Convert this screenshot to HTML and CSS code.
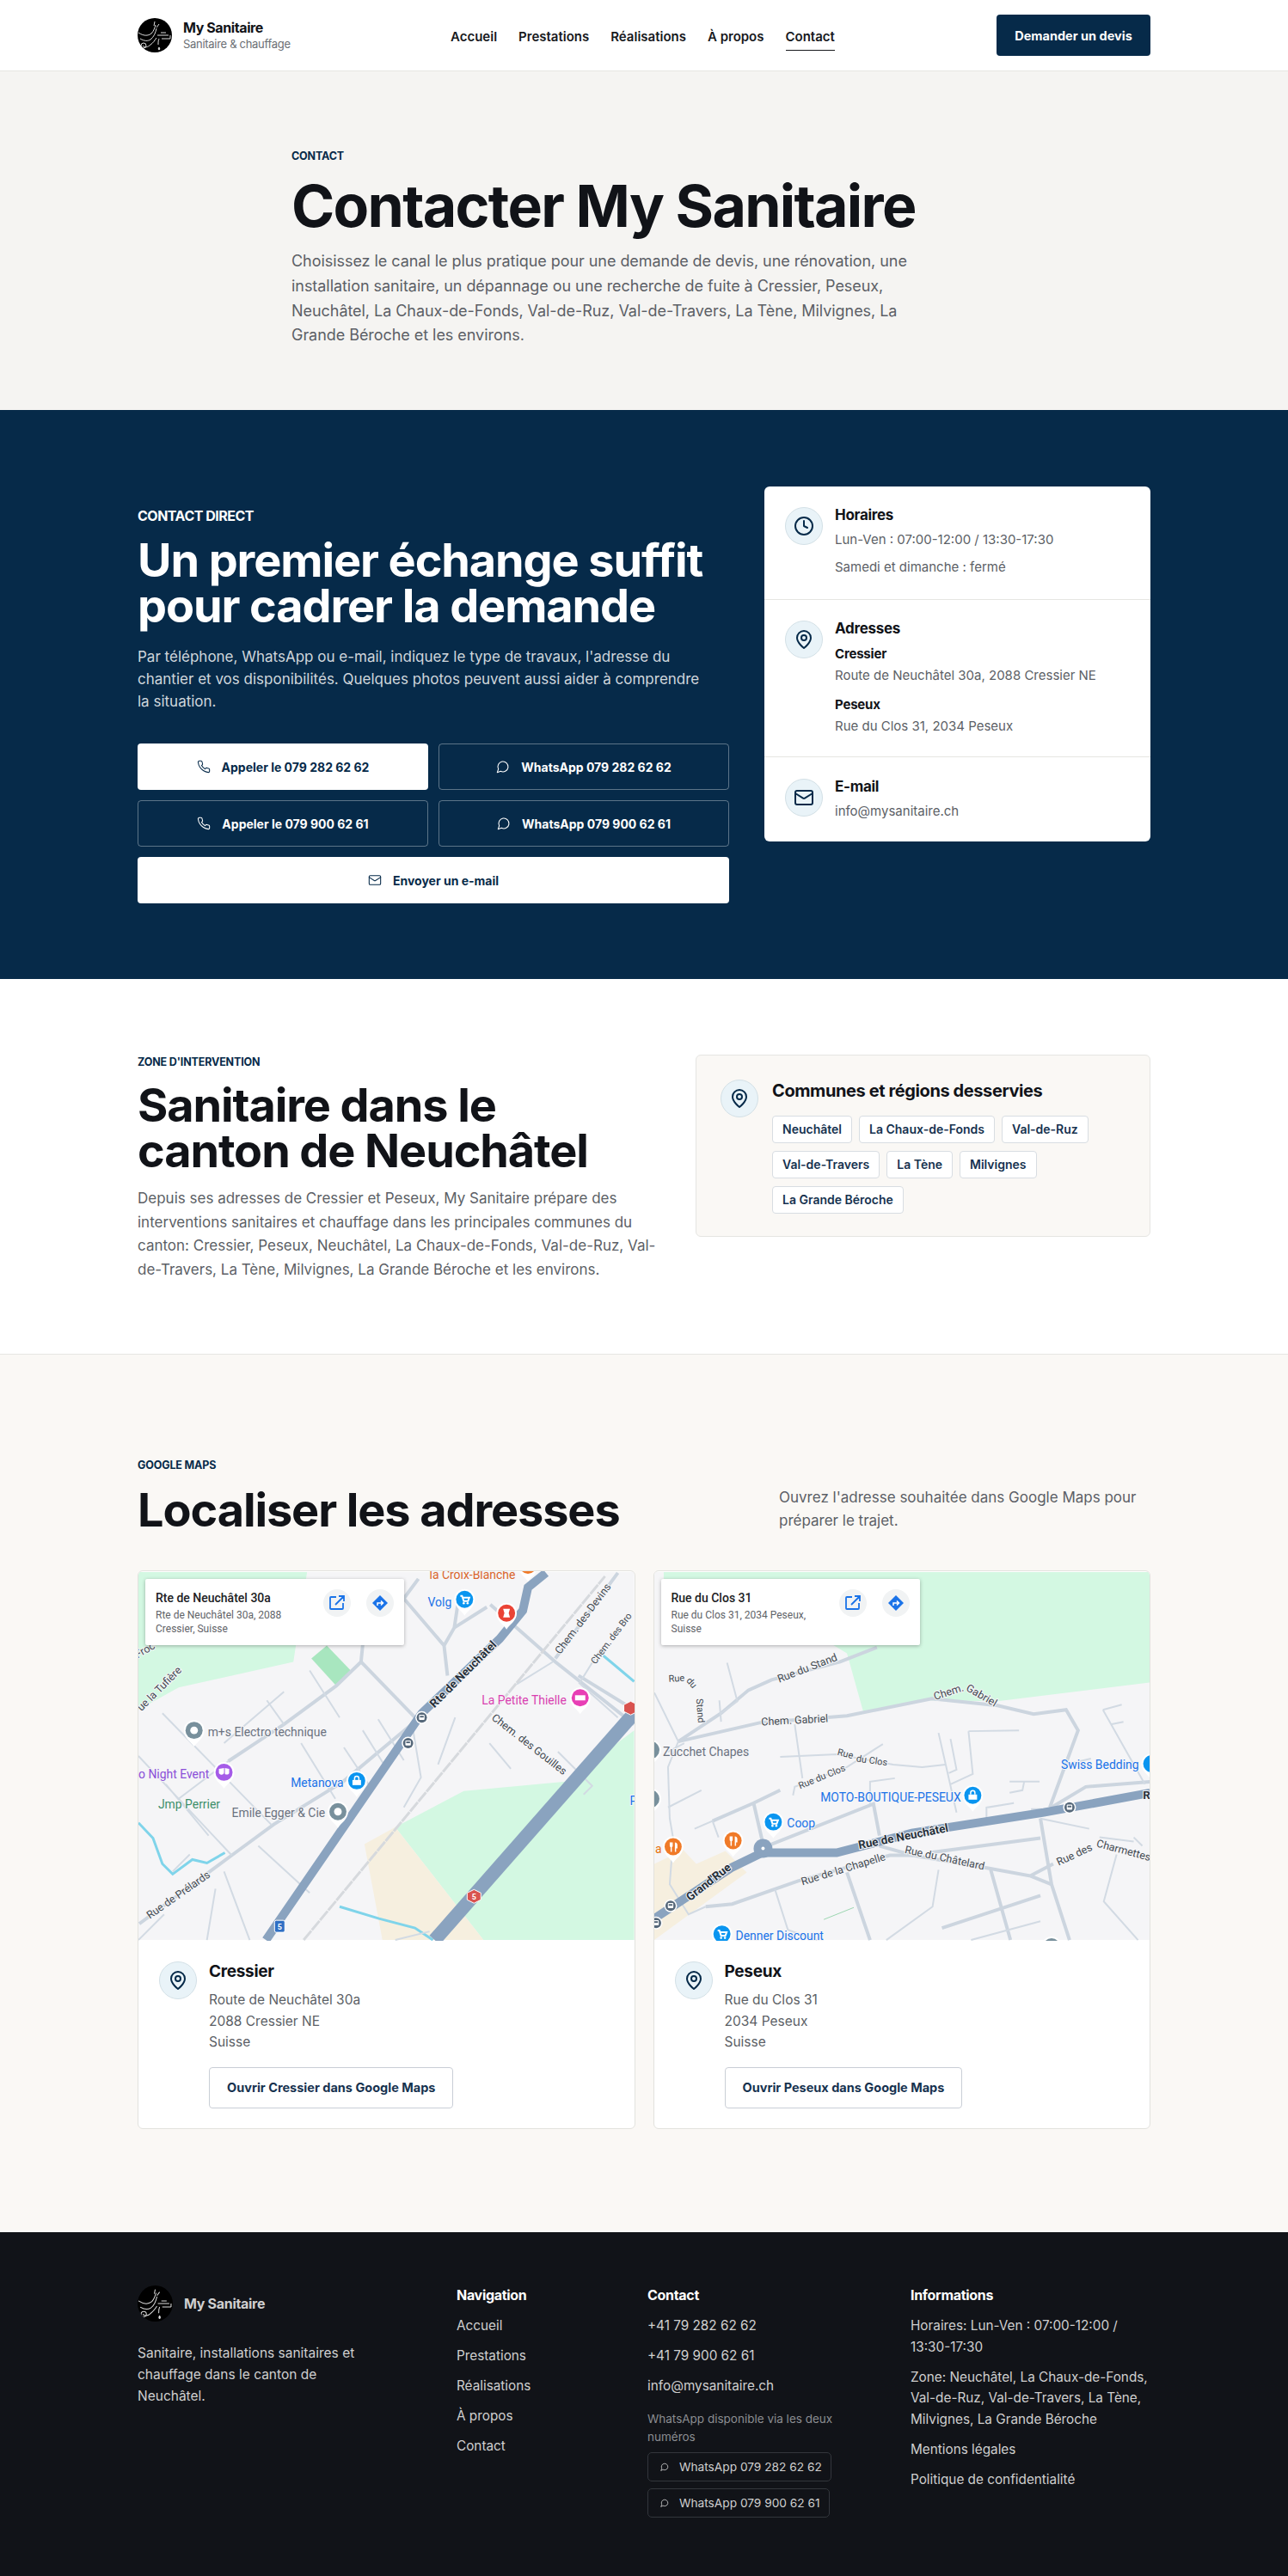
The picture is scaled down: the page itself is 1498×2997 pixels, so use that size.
FILE: index.html
```html
<!DOCTYPE html>
<html lang="fr">
<head>
  <meta charset="UTF-8">
  <title>Contact - My Sanitaire</title>
  <link rel="stylesheet" href="styles.css">
</head>
<body>

  <!-- shared icons -->
  <svg class="defs" width="0" height="0" aria-hidden="true">
    <symbol id="i-phone" viewBox="0 0 24 24"><path d="M22 16.92v3a2 2 0 0 1-2.18 2 19.79 19.79 0 0 1-8.63-3.07 19.5 19.5 0 0 1-6-6 19.79 19.79 0 0 1-3.07-8.67A2 2 0 0 1 4.11 2h3a2 2 0 0 1 2 1.72 12.84 12.84 0 0 0 .7 2.81 2 2 0 0 1-.45 2.11L8.09 9.91a16 16 0 0 0 6 6l1.27-1.27a2 2 0 0 1 2.11-.45 12.84 12.84 0 0 0 2.81.7A2 2 0 0 1 22 16.92z"/></symbol>
    <symbol id="i-chat" viewBox="0 0 24 24"><path d="M7.9 20A9 9 0 1 0 4 16.1L2 22Z"/></symbol>
    <symbol id="i-mail" viewBox="0 0 24 24"><rect x="2" y="4" width="20" height="16" rx="2"/><path d="m22 7-8.97 5.7a1.94 1.94 0 0 1-2.06 0L2 7"/></symbol>
    <symbol id="i-pin" viewBox="0 0 24 24"><path d="M20 10c0 6-8 12-8 12s-8-6-8-12a8 8 0 0 1 16 0Z"/><circle cx="12" cy="10" r="3"/></symbol>
    <symbol id="i-clock" viewBox="0 0 24 24"><circle cx="12" cy="12" r="10"/><path d="M12 6v6l4 2"/></symbol>
    <symbol id="i-logo" viewBox="0 0 40 40">
      <path d="M1 17c6 4 11 4 15 1 3-3 4-7 5-10M3 24c5 3 9 3 12 1 4-3 6-8 7-13M19 9l1-5M22 11l3-4M6 32c2 3 6 2 9-1 3-2 5-5 7-8" fill="none"/>
      <circle cx="7" cy="32" r="3" fill="none"/>
      <path d="M23 20h13M27 17h6M25 24c-1 2-1 4-1 7M28 24h10M38 20v4" fill="none"/>
      <path d="M25 34c1 1 1 3 0 3s-1-2 0-3z"/>
    </symbol>
    <g id="pin">
      <path d="M0 19C-3 14-12 9-12 0A12 12 0 1 1 12 0C12 9 3 14 0 19Z" fill="#fff"/>
      <circle r="10" fill="currentColor"/>
    </g>
    <g id="bus">
      <circle r="7.5" fill="#fff"/>
      <circle r="6" fill="#56687a"/>
      <rect x="-3.2" y="-3.2" width="6.4" height="6" rx="1" fill="#fff"/>
      <rect x="-2.2" y="-2" width="4.4" height="2" fill="#56687a"/>
    </g>
    <g id="g-cart">
      <path d="M-5-4h2l2 6h5l1.500-4H-2" fill="none" stroke="#fff" stroke-width="2"/>
      <circle cx="-1" cy="4.500" r="1.300" fill="#fff"/><circle cx="3.500" cy="4.500" r="1.300" fill="#fff"/>
    </g>
    <g id="g-bag">
      <path d="M-5-1h10v6h-10z" fill="#fff"/>
      <path d="M-2.500-1v-2a2.500 2.500 0 0 1 5 0v2" fill="none" stroke="#fff" stroke-width="1.500"/>
    </g>
    <g id="g-food">
      <path d="M-4-5v4a1.500 1.500 0 0 0 1 1.500V6h1.500V.5a1.500 1.500 0 0 0 1-1.500V-5M2-5v11h1.500V2H5V-2C5-4 3.500-5 2-5z" fill="#fff"/>
    </g>
    <g id="g-masks">
      <path d="M-6-4 0-5V0C0 3-4 4-6 1ZM1-5 6-4V1C5 3 3 3 1 2Z" fill="#fff"/>
    </g>
    <g id="g-open">
      <circle r="16" fill="#f1f3f4"/>
      <path d="M-1-7h-6a1 1 0 0 0-1 1V6a1 1 0 0 0 1 1H6a1 1 0 0 0 1-1V0M-2 2 7-7M2-8h6v6" fill="none" stroke="#1a73e8" stroke-width="1.800"/>
    </g>
    <g id="g-dir">
      <circle r="16" fill="#f1f3f4"/>
      <path d="M0-9 9 0 0 9-9 0Z" fill="#1a73e8"/>
      <path d="M-3 3V0H3M1-2.500 3.500 0 1 2.500" fill="none" stroke="#fff" stroke-width="1.500"/>
    </g>
  </svg>

  <header class="site-header">
    <div class="wrap header-row">
      <a class="brand" href="#">
        <svg class="logo"><use href="#i-logo"/></svg>
        <span class="brand-text">
          <span class="brand-name">My Sanitaire</span>
          <span class="brand-sub">Sanitaire &amp; chauffage</span>
        </span>
      </a>
      <nav class="main-nav">
        <a href="#">Accueil</a>
        <a href="#">Prestations</a>
        <a href="#">Réalisations</a>
        <a href="#">À propos</a>
        <a href="#" class="active">Contact</a>
      </nav>
      <a class="btn-quote" href="#">Demander un devis</a>
    </div>
  </header>

  <section class="hero">
    <div class="hero-inner">
      <p class="eyebrow">Contact</p>
      <h1>Contacter My Sanitaire</h1>
      <p class="hero-text">Choisissez le canal le plus pratique pour une demande de devis, une rénovation, une installation sanitaire, un dépannage ou une recherche de fuite à Cressier, Peseux, Neuchâtel, La Chaux-de-Fonds, Val-de-Ruz, Val-de-Travers, La Tène, Milvignes, La Grande Béroche et les environs.</p>
    </div>
  </section>

  <section class="direct">
    <div class="wrap direct-grid">
      <div class="direct-main">
        <p class="direct-label">Contact direct</p>
        <h2 class="title-light">Un premier échange suffit pour cadrer la demande</h2>
        <p class="direct-text">Par téléphone, WhatsApp ou e-mail, indiquez le type de travaux, l'adresse du chantier et vos disponibilités. Quelques photos peuvent aussi aider à comprendre la situation.</p>
        <div class="cta-grid">
          <a class="cta cta-white" href="#"><svg class="ico16"><use href="#i-phone"/></svg>Appeler le 079 282 62 62</a>
          <a class="cta cta-line" href="#"><svg class="ico16"><use href="#i-chat"/></svg>WhatsApp 079 282 62 62</a>
          <a class="cta cta-line" href="#"><svg class="ico16"><use href="#i-phone"/></svg>Appeler le 079 900 62 61</a>
          <a class="cta cta-line" href="#"><svg class="ico16"><use href="#i-chat"/></svg>WhatsApp 079 900 62 61</a>
          <a class="cta cta-white cta-wide" href="#"><svg class="ico16"><use href="#i-mail"/></svg>Envoyer un e-mail</a>
        </div>
      </div>

      <aside class="info-card">
        <div class="info-row">
          <span class="round-ico"><svg class="ico24"><use href="#i-clock"/></svg></span>
          <div>
            <h3>Horaires</h3>
            <p class="info-line first">Lun-Ven : 07:00-12:00 / 13:30-17:30</p>
            <p class="info-line next">Samedi et dimanche : fermé</p>
          </div>
        </div>
        <div class="info-row">
          <span class="round-ico"><svg class="ico24"><use href="#i-pin"/></svg></span>
          <div>
            <h3>Adresses</h3>
            <h4>Cressier</h4>
            <p class="info-line">Route de Neuchâtel 30a, 2088 Cressier NE</p>
            <h4 class="spaced">Peseux</h4>
            <p class="info-line">Rue du Clos 31, 2034 Peseux</p>
          </div>
        </div>
        <div class="info-row info-last">
          <span class="round-ico"><svg class="ico24"><use href="#i-mail"/></svg></span>
          <div>
            <h3>E-mail</h3>
            <p class="info-line first">info@mysanitaire.ch</p>
          </div>
        </div>
      </aside>
    </div>
  </section>

  <section class="zone">
    <div class="wrap zone-grid">
      <div class="zone-main">
        <p class="eyebrow">Zone d'intervention</p>
        <h2 class="title">Sanitaire dans le<br>canton de Neuchâtel</h2>
        <p class="body-text">Depuis ses adresses de Cressier et Peseux, My Sanitaire prépare des interventions sanitaires et chauffage dans les principales communes du canton: Cressier, Peseux, Neuchâtel, La Chaux-de-Fonds, Val-de-Ruz, Val-de-Travers, La Tène, Milvignes, La Grande Béroche et les environs.</p>
      </div>
      <div class="zone-card">
        <span class="round-ico"><svg class="ico24"><use href="#i-pin"/></svg></span>
        <div>
          <h3 class="zone-title">Communes et régions desservies</h3>
          <ul class="chips">
            <li>Neuchâtel</li>
            <li>La Chaux-de-Fonds</li>
            <li>Val-de-Ruz</li>
            <li>Val-de-Travers</li>
            <li>La Tène</li>
            <li>Milvignes</li>
            <li>La Grande Béroche</li>
          </ul>
        </div>
      </div>
    </div>
  </section>

  <section class="maps">
    <div class="wrap">
      <div class="maps-head">
        <div>
          <p class="eyebrow">Google Maps</p>
          <h2 class="title">Localiser les adresses</h2>
        </div>
        <p class="maps-text">Ouvrez l'adresse souhaitée dans Google Maps pour préparer le trajet.</p>
      </div>

      <div class="map-grid">
        <article class="map-card">
          <div class="map">
            <svg class="map-svg" viewBox="0 0 579 430">
              <rect width="579" height="430" fill="#f5f5f7"/>
              <path d="M0 0H197L181 105 47 135 0 161Z" fill="#d3f8e2"/>
              <path d="M202 101 220 86 248 115 231 133Z" fill="#a8e6bf"/>
              <path d="M300 298 380 256 499 245 579 185V430H403Z" fill="#d3f8e2"/>
              <path d="M264 318 300 298 403 430H285Z" fill="#f6efdf"/>
              <g class="water">
                <path d="M0 293 17 311 28 341 40 353 63 336 80 340 101 328"/>
                <path d="M235 391 281 405 323 416 344 430"/>
                <path d="M541 96 579 128"/>
              </g>
              <g class="rd">
                <path d="M1 411 109 331 158 295 239 245 319 178"/>
                <path d="M105 221 170 178 231 133 260 105 262 85"/>
                <path d="M260 105 323 170"/>
                <path d="M310 31 357 86 361 121M357 86 369 65 373 38M369 65 407 41M327 8 310 31"/>
                <path d="M411 38 487 105 579 178"/>
                <path d="M487 101 560 1M514 121 579 161"/>
              </g>
              <g class="rd-thin">
                <path d="M28 165 155 295M0 215 109 331M32 248 82 308M47 265 105 221"/>
                <path d="M442 131 484 105M100 200 170 140M170 178 150 150M200 115 235 170M262 185 290 230M280 172 310 220"/>
                <path d="M240 205 270 250M190 200 230 265M140 320 200 375M300 430 340 420M130 430 100 350M90 370 80 430"/>
                <path d="M370 170 350 225M410 200 435 230M490 210 530 250 520 260M540 90 515 130 560 170"/>
                <path d="M320 180 330 240 310 275M60 330 40 350M0 430 30 400"/>
              </g>
              <path class="rail" d="M193 430 545 5"/>
              <path class="hw" d="M346 430 579 165"/>
              <path class="mw" d="M149 430 331 165 422 78 449 45 455 18 476 1"/>
              <g class="lb-road">
                <text transform="translate(380 120) rotate(-45)" class="lb-bold">Rte de Neuchâtel</text>
                <text transform="translate(520 55) rotate(-53)">Chem. des Devins</text>
                <text transform="translate(553 78) rotate(-53)" class="lb-sm">Chem. des Bro</text>
                <text transform="translate(456 202) rotate(38)">Chem. des Gouilles</text>
                <text transform="translate(47 378) rotate(-35)">Rue de Prélards</text>
                <text transform="translate(25 137) rotate(-45)">ue la Tufière</text>
                <text transform="translate(8 92) rotate(-30)">Froc</text>
              </g>
              <g class="lb-place">
                <text x="340" y="8" fill="#d9652b">la Croix-Blanche</text>
                <text x="338" y="40" fill="#1a73e8">Volg</text>
                <text x="401" y="155" fill="#d93fb0">La Petite Thielle</text>
                <text x="81" y="192" fill="#6b7280">m+s Electro technique</text>
                <text x="0" y="241" fill="#8a4fd8">o Night Event</text>
                <text x="178" y="251" fill="#1a73e8">Metanova</text>
                <text x="23" y="276" fill="#3d8f6a">Jmp Perrier</text>
                <text x="109" y="286" fill="#6b7280">Emile Egger &amp; Cie</text>
                <text x="574" y="272" fill="#1a73e8">P</text>
              </g>
              <use href="#pin" x="65" y="185" class="p-gray"/><circle cx="65" cy="185" r="4.500" fill="#fff"/>
              <use href="#pin" x="100" y="234" class="p-purple"/><use href="#g-masks" x="100" y="234"/>
              <use href="#pin" x="255" y="244" class="p-blue"/><use href="#g-bag" x="255" y="244"/>
              <use href="#pin" x="233" y="280" class="p-gray"/><circle cx="233" cy="280" r="4.500" fill="#fff"/>
              <use href="#pin" x="381" y="32" class="p-blue"/><use href="#g-cart" x="381" y="32"/>
              <use href="#pin" x="430" y="48" class="p-red"/><path d="M426 43h8l-1.500 5 1.500 5h-8l1.500-5z" fill="#fff"/>
              <use href="#pin" x="516" y="147" class="p-pink"/><rect x="510" y="144" width="12" height="6" fill="#fff"/>
              <use href="#pin" x="455" y="-8" class="p-orange"/>
              <use href="#bus" x="331" y="170"/>
              <use href="#bus" x="315" y="200"/>
              <path d="M392 371 400 375V383L392 387 384 383V375Z" fill="#d9534f" stroke="#fff"/>
              <text x="392" y="383" class="shield">5</text>
              <rect x="159" y="407" width="12" height="14" rx="2" fill="#2f6fc4" stroke="#fff"/>
              <text x="165" y="418" class="shield">5</text>
              <path d="M575 151 583 155V163L575 167 567 163V155Z" fill="#d9534f" stroke="#fff"/>
            </svg>
            <div class="map-box">
              <div class="map-box-text">
                <strong>Rte de Neuchâtel 30a</strong>
                <span>Rte de Neuchâtel 30a, 2088 Cressier, Suisse</span>
              </div>
              <svg class="map-actions" viewBox="0 0 82 32"><use href="#g-open" x="16" y="16"/><use href="#g-dir" x="66" y="16"/></svg>
            </div>
          </div>
          <div class="map-body">
            <span class="round-ico"><svg class="ico24"><use href="#i-pin"/></svg></span>
            <div>
              <h3>Cressier</h3>
              <p class="addr">Route de Neuchâtel 30a</p>
              <p class="addr">2088 Cressier NE</p>
              <p class="addr">Suisse</p>
              <a class="btn-map" href="#">Ouvrir Cressier dans Google Maps</a>
            </div>
          </div>
        </article>

        <article class="map-card">
          <div class="map">
            <svg class="map-svg" viewBox="0 0 579 430">
              <rect width="579" height="430" fill="#f5f5f7"/>
              <path d="M11 0H579V129L401 151 320 150 244 163 225 95 200 80H11Z" fill="#d3f8e2"/>
              <path d="M0 341 34 325 49 341 83 326 108 351 0 430Z" fill="#f6efdf"/>
              <g class="rd">
                <path d="M28 198 78 165 110 138 137 126 217 105 260 88"/>
                <path d="M28 198 124 176 225 168 324 148 401 156 443 166 481 161 495 185 462 275"/>
                <path d="M68 291 116 270 147 255M116 270 127 318M137 318 256 271 263 308"/>
                <path d="M60 391 91 388 168 361 275 331 302 331M321 328 451 311"/>
                <path d="M263 320 302 331 390 346 439 355 466 341M439 355 464 365"/>
                <path d="M451 288 464 365 485 430M393 348 416 430M225 351 252 430M336 416 451 378"/>
                <path d="M464 275 504 251 579 245"/>
              </g>
              <g class="rd-thin">
                <path d="M0 141 28 198 16 228 18 288 22 311 18 365 40 400 60 391"/>
                <path d="M85 106 97 151 78 165M76 150 78 175M16 210 35 200"/>
                <path d="M147 216 213 213 279 225 313 228 340 225"/>
                <path d="M164 178 173 241M162 261 164 251 225 228 267 201"/>
                <path d="M16 275 55 255M47 300 68 291 75 310"/>
                <path d="M252 271 252 245 281 241M332 188 353 281M346 195 353 231 344 235M367 186 426 185M367 186 372 236 346 248"/>
                <path d="M141 371 156 418 190 430M271 430 325 391 332 348M370 430 451 408"/>
                <path d="M524 161 573 248M524 161 546 155M533 178 548 175M451 288 508 300M480 225 510 218"/>
                <path d="M415 245 450 245M415 258 430 255 432 245M390 275 420 270 388 275 388 290M440 277 470 277"/>
                <path d="M520 310 560 315M540 330 525 385 565 430M560 310 570 320"/>
              </g>
              <path class="mw" d="M0 405 91 345 126 328 213 328 301 305 455 281 579 258"/>
              <circle cx="127" cy="323" r="11" fill="#8aa3bf"/><circle cx="127" cy="323" r="2" fill="#fff"/>
              <path d="M198 406 233 392" stroke="#9bd6b0" fill="none"/>
              <g class="lb-road">
                <text transform="translate(179 113) rotate(-21)">Rue du Stand</text>
                <text transform="translate(26 125) rotate(-3)" class="lb-sm">Rue</text>
                <text transform="translate(43 130) rotate(50)" class="lb-sm">du</text>
                <text transform="translate(53 162) rotate(85)" class="lb-sm">Stand</text>
                <text transform="translate(164 174) rotate(-3)">Chem. Gabriel</text>
                <text transform="translate(344 141) rotate(-18)">Chem.</text>
                <text transform="translate(382 145) rotate(30)">Gabriel</text>
                <text transform="translate(223 213) rotate(15)" class="lb-sm">Rue</text>
                <text transform="translate(254 221) rotate(8)" class="lb-sm">du Clos</text>
                <text transform="translate(196 240) rotate(-22)" class="lb-sm">Rue du Clos</text>
                <text transform="translate(291 310) rotate(-11)" class="lb-bold">Rue de Neuchâtel</text>
                <text transform="translate(64 363) rotate(-38)" class="lb-bold">Grand'Rue</text>
                <text transform="translate(221 348) rotate(-17)">Rue de la Chapelle</text>
                <text transform="translate(339 335) rotate(12)">Rue du Châtelard</text>
                <text transform="translate(491 331) rotate(-25)">Rue des</text>
                <text transform="translate(548 326) rotate(15)">Charmettes</text>
                <text transform="translate(575 262)" class="lb-bold">R</text>
              </g>
              <g class="lb-place">
                <text x="10" y="215" fill="#6b7280">Zucchet Chapes</text>
                <text x="194" y="268" fill="#1a73e8">MOTO-BOUTIQUE-PESEUX</text>
                <text x="155" y="298" fill="#1a73e8">Coop</text>
                <text x="475" y="230" fill="#1a73e8">Swiss Bedding</text>
                <text x="95" y="430" fill="#1a73e8">Denner Discount</text>
                <text x="1" y="328" fill="#e8710a">a</text>
              </g>
              <use href="#pin" x="372" y="261" class="p-blue"/><use href="#g-bag" x="372" y="261"/>
              <use href="#pin" x="139" y="292" class="p-blue"/><use href="#g-cart" x="139" y="292"/>
              <use href="#pin" x="92" y="314" class="p-orange"/><use href="#g-food" x="92" y="314"/>
              <use href="#pin" x="22" y="321" class="p-orange"/><use href="#g-food" x="22" y="321"/>
              <use href="#pin" x="79" y="423" class="p-blue"/><use href="#g-cart" x="79" y="423"/>
              <use href="#pin" x="464" y="438" class="p-gray"/>
              <use href="#pin" x="581" y="224" class="p-blue"/>
              <use href="#pin" x="-4" y="265" class="p-gray"/>
              <use href="#pin" x="-4" y="208" class="p-gray"/>
              <use href="#bus" x="485" y="275"/>
              <use href="#bus" x="19" y="390"/>
              <use href="#bus" x="2" y="410"/>
            </svg>
            <div class="map-box">
              <div class="map-box-text">
                <strong>Rue du Clos 31</strong>
                <span>Rue du Clos 31, 2034 Peseux, Suisse</span>
              </div>
              <svg class="map-actions" viewBox="0 0 82 32"><use href="#g-open" x="16" y="16"/><use href="#g-dir" x="66" y="16"/></svg>
            </div>
          </div>
          <div class="map-body">
            <span class="round-ico"><svg class="ico24"><use href="#i-pin"/></svg></span>
            <div>
              <h3>Peseux</h3>
              <p class="addr">Rue du Clos 31</p>
              <p class="addr">2034 Peseux</p>
              <p class="addr">Suisse</p>
              <a class="btn-map" href="#">Ouvrir Peseux dans Google Maps</a>
            </div>
          </div>
        </article>
      </div>
    </div>
  </section>

  <footer class="site-footer">
    <div class="wrap footer-grid">
      <div>
        <div class="footer-brand">
          <svg class="logo logo-foot"><use href="#i-logo"/></svg>
          <span>My Sanitaire</span>
        </div>
        <p class="footer-desc">Sanitaire, installations sanitaires et chauffage dans le canton de Neuchâtel.</p>
      </div>
      <div class="footer-col">
        <h5>Navigation</h5>
        <a href="#">Accueil</a>
        <a href="#">Prestations</a>
        <a href="#">Réalisations</a>
        <a href="#">À propos</a>
        <a href="#">Contact</a>
      </div>
      <div class="footer-col">
        <h5>Contact</h5>
        <a href="#">+41 79 282 62 62</a>
        <a href="#">+41 79 900 62 61</a>
        <a href="#">info@mysanitaire.ch</a>
        <p class="footer-note">WhatsApp disponible via les deux numéros</p>
        <a class="wa-chip" href="#"><svg class="ico10"><use href="#i-chat"/></svg>WhatsApp 079 282 62 62</a>
        <a class="wa-chip" href="#"><svg class="ico10"><use href="#i-chat"/></svg>WhatsApp 079 900 62 61</a>
      </div>
      <div class="footer-col">
        <h5>Informations</h5>
        <p>Horaires: Lun-Ven : 07:00-12:00 / <span class="nowrap">13:30-17:30</span></p>
        <p>Zone: Neuchâtel, La Chaux-de-Fonds, Val-de-Ruz, Val-de-Travers, La Tène, Milvignes, La Grande Béroche</p>
        <a href="#">Mentions légales</a>
        <a href="#">Politique de confidentialité</a>
      </div>
    </div>
  </footer>

</body>
</html>
```

FILE: styles.css
```css
* {
  box-sizing: border-box;
}

body {
  margin: 0;
  background: #fff;
  color: #111318;
  font-family: 'Inter', 'Liberation Sans', sans-serif;
}

a {
  color: inherit;
  text-decoration: none;
}

h1, h2, h3, h4, h5, p, ul {
  margin: 0;
  padding: 0;
}

.defs {
  position: absolute;
}

.wrap {
  width: 1178px;
  margin: 0 auto;
}

.nowrap {
  white-space: nowrap;
}

/* icons */
.ico10, .ico16, .ico24 {
  fill: none;
  stroke: currentColor;
  stroke-linecap: round;
  stroke-linejoin: round;
  flex: none;
}

.ico10 { width: 10px; height: 10px; stroke-width: 2; }
.ico16 { width: 16px; height: 16px; stroke-width: 1.6; }
.ico24 { width: 24px; height: 24px; stroke-width: 2; }

.round-ico {
  width: 44px;
  height: 44px;
  flex: none;
  display: flex;
  align-items: center;
  justify-content: center;
  border-radius: 50%;
  background: #e9f3f8;
  border: 1px solid #d3e0e6;
  color: #062a49;
}

/* header */
.site-header {
  height: 83px;
  border-bottom: 1px solid #e6e6e2;
  background: #fff;
}

.header-row {
  height: 82px;
  display: flex;
  align-items: center;
}

.brand {
  width: 364px;
  display: flex;
  align-items: center;
  gap: 13px;
}

.logo {
  width: 40px;
  height: 40px;
  border-radius: 50%;
  background: #000;
  color: #ddd;
  stroke: #ddd;
  stroke-width: 1;
  fill: #ddd;
}

.brand-text {
  display: flex;
  flex-direction: column;
}

.brand-name {
  font-size: 16px;
  font-weight: 700;
  line-height: 20px;
  letter-spacing: -0.4px;
}

.brand-sub {
  font-size: 13px;
  line-height: 18px;
  color: #6c6f75;
  letter-spacing: -0.3px;
}

.main-nav {
  display: flex;
  gap: 25px;
}

.main-nav a {
  font-size: 15px;
  font-weight: 600;
  padding: 9px 0 6px;
  border-bottom: 1px solid transparent;
  color: #17191d;
}

.main-nav a.active {
  border-bottom-color: #17191d;
}

.btn-quote {
  width: 179px;
  height: 48px;
  margin-left: auto;
  display: flex;
  align-items: center;
  justify-content: center;
  background: #062a49;
  color: #fff;
  border-radius: 4px;
  font-size: 14.5px;
  font-weight: 700;
}

/* hero */
.hero {
  height: 394px;
  background: #f5f4f2;
  padding-top: 92px;
}

.hero-inner {
  width: 820px;
  margin: 0 auto;
}

.eyebrow {
  font-size: 12.5px;
  font-weight: 700;
  line-height: 14px;
  text-transform: uppercase;
  color: #062a49;
  letter-spacing: -0.15px;
}

h1 {
  margin-top: 12px;
  font-size: 68px;
  line-height: 76px;
  font-weight: 700;
  letter-spacing: -1.7px;
  color: #111318;
}

.hero-text {
  margin-top: 13px;
  width: 730px;
  font-size: 18px;
  line-height: 28.8px;
  color: #5c5f66;
  letter-spacing: -0.05px;
}

/* contact direct */
.direct {
  height: 662px;
  padding-top: 89px;
  background: #062a49;
  color: #fff;
}

.direct-grid {
  display: grid;
  grid-template-columns: 688px 449px;
  gap: 41px;
  align-items: start;
}

.direct-main {
  padding-top: 23px;
}

.direct-label {
  font-size: 16px;
  font-weight: 700;
  line-height: 22px;
  text-transform: uppercase;
  letter-spacing: -0.5px;
}

.title-light, .title {
  font-size: 54px;
  line-height: 53px;
  font-weight: 700;
  letter-spacing: -1.1px;
}

.title-light {
  margin-top: 14px;
}

.direct-text {
  margin-top: 20px;
  width: 655px;
  font-size: 17px;
  line-height: 26px;
  color: rgba(255, 255, 255, 0.82);
}

.cta-grid {
  margin-top: 36px;
  display: grid;
  grid-template-columns: 1fr 1fr;
  gap: 12px;
}

.cta {
  height: 54px;
  display: flex;
  align-items: center;
  justify-content: center;
  gap: 13px;
  border-radius: 4px;
  font-size: 14px;
  font-weight: 700;
}

.cta-white {
  background: #fff;
  color: #062a49;
}

.cta-line {
  color: #fff;
  border: 1px solid rgba(255, 255, 255, 0.35);
}

.cta-wide {
  grid-column: 1 / 3;
}

.info-card {
  background: #fff;
  color: #111318;
  border-radius: 6px;
  overflow: hidden;
}

.info-row {
  display: flex;
  gap: 14px;
  padding: 24px;
  border-bottom: 1px solid #e6e6e2;
}

.info-last {
  padding-top: 25px;
  border-bottom: 0;
}

.info-row h3 {
  font-size: 17px;
  line-height: 20px;
  font-weight: 700;
  letter-spacing: -0.3px;
  margin-top: -1px;
}

.info-row h4 {
  margin-top: 10px;
  font-size: 15px;
  line-height: 20px;
  font-weight: 700;
  letter-spacing: -0.2px;
}

.info-row h4.spaced {
  margin-top: 13px;
}

.info-line {
  font-size: 15px;
  line-height: 22px;
  color: #5c5f66;
  margin-top: 4px;
}

.info-line.first {
  margin-top: 8px;
}

.info-line.next {
  margin-top: 10px;
  margin-bottom: 2px;
}

/* zone */
.zone {
  height: 437px;
  padding-top: 88px;
  border-bottom: 1px solid #e6e6e2;
}

.zone-grid {
  display: grid;
  grid-template-columns: 610px 529px;
  gap: 39px;
  align-items: start;
}

.zone-main .eyebrow {
  margin-top: 2px;
}

.zone .title {
  margin-top: 16px;
}

.body-text {
  margin-top: 16px;
  width: 606px;
  font-size: 17px;
  line-height: 27.5px;
  color: #5c5f66;
}

.zone-card {
  display: flex;
  gap: 16px;
  height: 212px;
  padding: 28px;
  background: #faf8f5;
  border: 1px solid #e5e5e2;
  border-radius: 6px;
}

.zone-title {
  font-size: 20px;
  line-height: 26px;
  font-weight: 700;
  letter-spacing: -0.4px;
}

.chips {
  margin-top: 16px;
  list-style: none;
  display: flex;
  flex-wrap: wrap;
  gap: 9px 8px;
}

.chips li {
  height: 32px;
  line-height: 30px;
  padding: 0 11px;
  background: #fff;
  border: 1px solid #d8dde2;
  border-radius: 4px;
  font-size: 14px;
  font-weight: 600;
  color: #16324f;
}

/* maps */
.maps {
  height: 1021px;
  padding-top: 122px;
  background: #faf8f5;
}

.maps-head {
  display: flex;
  justify-content: space-between;
  align-items: flex-start;
  padding-bottom: 44px;
}

.maps-head .title {
  margin-top: 18px;
}

.maps-text {
  width: 432px;
  margin-top: 31px;
  font-size: 17px;
  line-height: 27px;
  color: #5c5f66;
}

.map-grid {
  display: grid;
  grid-template-columns: 1fr 1fr;
  gap: 21px;
}

.map-card {
  height: 650px;
  background: #fff;
  border: 1px solid #e2e2de;
  border-radius: 6px;
  overflow: hidden;
}

.map {
  position: relative;
  height: 430px;
}

.map-svg {
  display: block;
  width: 100%;
  height: 100%;
  font-family: 'Roboto', sans-serif;
}

.water path {
  fill: none;
  stroke: #7fd4ea;
  stroke-width: 3;
}

.rd path {
  fill: none;
  stroke: #ccd5df;
  stroke-width: 4;
}

.rd-thin path {
  fill: none;
  stroke: #d2dae3;
  stroke-width: 2;
}

.rail {
  fill: none;
  stroke: #d6d9dd;
  stroke-width: 3;
  stroke-dasharray: 14 1;
}

.mw, .hw {
  fill: none;
  stroke: #8aa3bf;
  stroke-width: 10;
}

.hw {
  stroke-width: 16;
}

.lb-road text {
  font-size: 12.5px;
  fill: #434a52;
  text-anchor: middle;
  dominant-baseline: middle;
  paint-order: stroke;
  stroke: #f5f5f7;
  stroke-width: 2px;
}

.lb-road .lb-bold {
  font-size: 13.5px;
  font-weight: 700;
  fill: #26303a;
}

.lb-road .lb-sm {
  font-size: 11px;
}

.lb-place text {
  font-size: 14px;
  paint-order: stroke;
  stroke: #f5f5f7;
  stroke-width: 2px;
}

.shield {
  font-size: 9px;
  font-weight: 700;
  fill: #fff;
  text-anchor: middle;
}

.p-blue { color: #0a95f0; }
.p-gray { color: #78909c; }
.p-purple { color: #a55be8; }
.p-red { color: #ea4335; }
.p-pink { color: #e83fb5; }
.p-orange { color: #f07a28; }

.map-box {
  position: absolute;
  top: 9px;
  left: 8px;
  width: 301px;
  height: 77px;
  display: flex;
  justify-content: space-between;
  padding: 12px 12px 0 12px;
  background: #fff;
  border-radius: 2px;
  box-shadow: 0 1px 4px rgba(0, 0, 0, 0.3);
  font-family: 'Roboto', sans-serif;
}

.map-box-text {
  width: 170px;
}

.map-box-text strong {
  display: block;
  font-size: 14px;
  line-height: 20px;
  font-weight: 500;
  color: #202124;
}

.map-box-text span {
  display: block;
  margin-top: 2px;
  font-size: 12px;
  line-height: 16px;
  color: #5f6368;
}

.map-actions {
  width: 82px;
  height: 32px;
}

.map-body {
  display: flex;
  gap: 14px;
  padding: 24px;
}

.map-body h3 {
  font-size: 19px;
  line-height: 24px;
  font-weight: 700;
  letter-spacing: -0.3px;
}

.addr {
  font-size: 15.5px;
  line-height: 24.5px;
  color: #5c5f66;
}

.map-body h3 + .addr {
  margin-top: 9px;
}

.btn-map {
  margin-top: 16px;
  height: 48px;
  padding: 0 20px;
  display: inline-flex;
  align-items: center;
  background: #fff;
  border: 1px solid #c9ced6;
  border-radius: 4px;
  font-size: 14.5px;
  font-weight: 700;
  color: #16324f;
}

/* footer */
.site-footer {
  height: 401px;
  padding-top: 62px;
  background: #111318;
  color: #cfcfcf;
}

.footer-grid {
  display: grid;
  grid-template-columns: 331px 182px 266px 1fr;
  gap: 40px;
}

.footer-brand {
  display: flex;
  align-items: center;
  gap: 13px;
  font-size: 16px;
  font-weight: 700;
  letter-spacing: -0.3px;
}

.footer-desc {
  margin-top: 24px;
  width: 270px;
  font-size: 15.5px;
  line-height: 25px;
}

.footer-col {
  display: flex;
  flex-direction: column;
  align-items: flex-start;
  font-size: 15.3px;
  line-height: 24.5px;
}

.footer-col h5 {
  color: #fff;
  font-size: 16px;
  line-height: 22px;
  font-weight: 700;
  letter-spacing: -0.3px;
  margin-bottom: 13px;
}

.footer-col a, .footer-col p {
  margin-bottom: 10.5px;
}

.footer-col .footer-note {
  width: 235px;
  font-size: 13.5px;
  line-height: 21px;
  color: #8b8d91;
  margin: 5px 0 7px;
}

.footer-col .wa-chip {
  height: 34px;
  display: flex;
  align-items: center;
  gap: 12px;
  padding: 0 10px 0 14px;
  margin-bottom: 8px;
  border: 1px solid #33363c;
  border-radius: 5px;
  font-size: 13.7px;
}

.logo-foot {
  flex: none;
  width: 41px;
  height: 42px;
}
```
